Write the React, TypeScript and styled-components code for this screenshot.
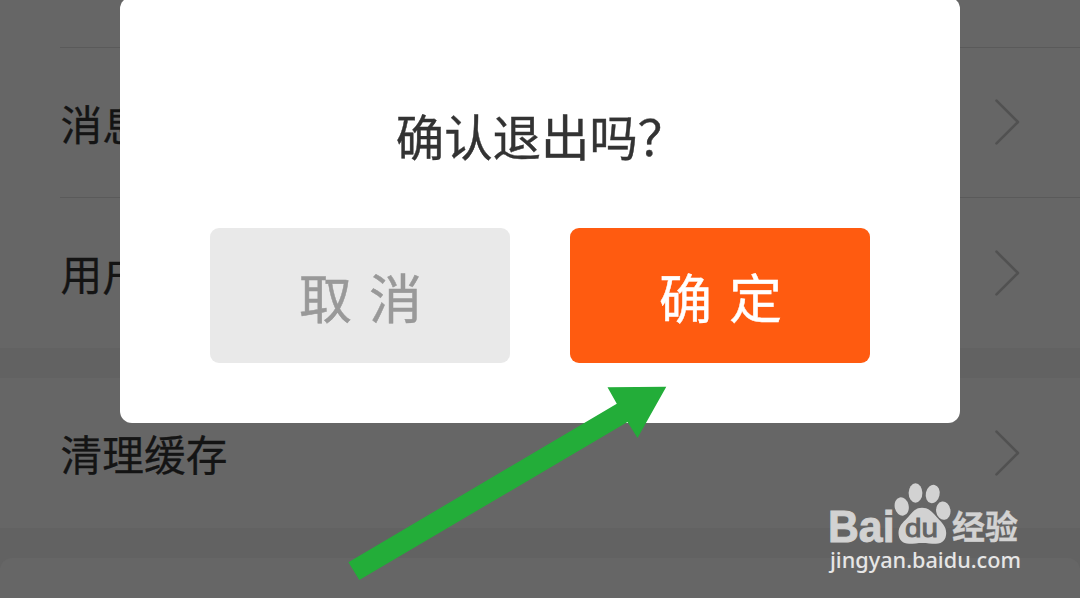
import React from "react";
import styled, { createGlobalStyle } from "styled-components";

const GlobalStyle = createGlobalStyle`
  * { box-sizing: border-box; }
  body {
    margin: 0;
    overflow: hidden;
    background: #626262;
    font-family: "Noto Sans CJK SC", "Noto Sans", sans-serif;
  }
`;

const Screen = styled.main`
  position: relative;
  width: 1080px;
  height: 598px;
  overflow: hidden;
  background: #626262;
`;

const SettingsList = styled.div`
  display: flex;
  flex-direction: column;
  gap: 30px;
`;

const Group = styled.section<{ $rounded?: boolean }>`
  background: #666666;
  border-radius: ${(p) => (p.$rounded ? "12px 12px 0 0" : "0")};
`;

const Row = styled.div<{ $height: number; $divider?: boolean }>`
  display: flex;
  align-items: center;
  justify-content: space-between;
  height: ${(p) => p.$height}px;
  margin-left: 60px;
  padding-right: 60px;
  border-bottom: ${(p) => (p.$divider ? "1px solid #5a5a5a" : "none")};
`;

const RowLabel = styled.span`
  padding-left: 0.6px;
  font-size: 41.7px;
  line-height: 60px;
  color: #141414;
  -webkit-text-stroke: 0.3px #141414;
`;

const ChevronIcon = styled.svg`
  width: 28px;
  height: 50px;
  margin-bottom: 1px;
  fill: none;
  stroke: #515151;
  stroke-width: 2.6;
  stroke-linecap: round;
  stroke-linejoin: round;
`;

const Dialog = styled.div`
  position: absolute;
  top: -3px;
  left: 120px;
  display: flex;
  flex-direction: column;
  align-items: center;
  width: 840px;
  height: 426px;
  padding: 103px 90px 60px;
  border-radius: 12px;
  background: #ffffff;
`;

const DialogTitle = styled.h1`
  margin: 0 0 58px;
  padding-left: 2px;
  font-size: 48.4px;
  font-weight: 400;
  line-height: 70px;
  color: #333333;
  -webkit-text-stroke: 0.4px #333333;
`;

const Actions = styled.div`
  display: flex;
  gap: 60px;
`;

const ActionButton = styled.button<{ $primary?: boolean }>`
  width: 300px;
  height: 135px;
  padding: 0 0 0 1px;
  border: 0;
  border-radius: 9px;
  background: ${(p) => (p.$primary ? "#ff5b10" : "#e9e9e9")};
  color: ${(p) => (p.$primary ? "#ffffff" : "#999999")};
  font-family: inherit;
  font-size: 53px;
  word-spacing: 5px;
  line-height: 76px;
  -webkit-text-stroke: 0.5px currentColor;
`;

const Arrow = styled.svg`
  position: absolute;
  top: 380px;
  left: 340px;
  width: 340px;
  height: 210px;
  fill: #23ad39;
`;

const Watermark = styled.svg`
  position: absolute;
  top: 470px;
  left: 810px;
  width: 230px;
  height: 128px;
  fill: #d2d2d2;
`;

const Chevron = () => (
  <ChevronIcon viewBox="0 0 28 50">
    <path d="M4.5 3.7 26 25 4.5 46.3" />
  </ChevronIcon>
);

const SettingRow = ({ label, divider }: { label: string; divider?: boolean }) => (
  <Row $height={150} $divider={divider}>
    <RowLabel>{label}</RowLabel>
    <Chevron />
  </Row>
);

const BaiduMark = () => (
  <Watermark viewBox="0 0 230 128">
    <text x="18" y="72.3" fontFamily="Liberation Sans" fontWeight="700" fontSize="44.5" textLength="66.5" lengthAdjust="spacingAndGlyphs" stroke="#d2d2d2" strokeWidth="1">
      Bai
    </text>
    <ellipse cx="91.7" cy="36.5" rx="7" ry="9.3" transform="rotate(-12 91.7 36.5)" />
    <ellipse cx="105.5" cy="23" rx="6.9" ry="9.7" />
    <ellipse cx="122.7" cy="24" rx="6.9" ry="9.3" transform="rotate(12 122.7 24)" />
    <ellipse cx="133.3" cy="40.7" rx="7.2" ry="9.2" transform="rotate(-8 133.3 40.7)" />
    <path d="M112 37.8C104.5 37.8 101.5 43.5 97 48.3C92.5 52.8 88.5 56.5 88.5 63C88.5 70 93 73.8 99 73.8C104 73.8 107.5 73 112.5 73C117 73 121 73.8 126 73.8C132.5 73.8 136.2 69.5 136.2 63C136.2 56.5 132 53 127.8 48.3C123 43 119.5 37.8 112 37.8Z" />
    <text x="95" y="67.3" fontFamily="Liberation Sans" fontWeight="400" fontSize="26" textLength="33" lengthAdjust="spacingAndGlyphs" fill="#646464" stroke="#646464" strokeWidth="0.9">
      du
    </text>
    <text x="142" y="69.2" fontFamily="Noto Sans CJK SC" fontWeight="700" fontSize="33" textLength="66" lengthAdjust="spacingAndGlyphs" stroke="#d2d2d2" strokeWidth="0.3">
      经验
    </text>
    <text x="20" y="98" fontFamily="Noto Sans" fontWeight="500" fontSize="21.5" textLength="191" lengthAdjust="spacingAndGlyphs" fill="#e6e6e6">
      jingyan.baidu.com
    </text>
  </Watermark>
);

export default function App() {
  return (
    <>
      <GlobalStyle />
      <Screen>
        <SettingsList>
          <Group>
            <Row $height={48} $divider />
            <SettingRow label="消息" divider />
            <SettingRow label="用户" />
          </Group>
          <Group>
            <SettingRow label="清理缓存" />
          </Group>
          <Group $rounded>
            <Row $height={40} />
          </Group>
        </SettingsList>
        <Dialog role="dialog">
          <DialogTitle>确认退出吗？</DialogTitle>
          <Actions>
            <ActionButton>取 消</ActionButton>
            <ActionButton $primary>确 定</ActionButton>
          </Actions>
        </Dialog>
        <Arrow viewBox="0 0 340 210">
          <path d="M267.5 7.2 326.3 6.7 297.5 58 287.5 42 19.3 200 8.4 182.2 276.8 23.8Z" />
        </Arrow>
        <BaiduMark />
      </Screen>
    </>
  );
}
